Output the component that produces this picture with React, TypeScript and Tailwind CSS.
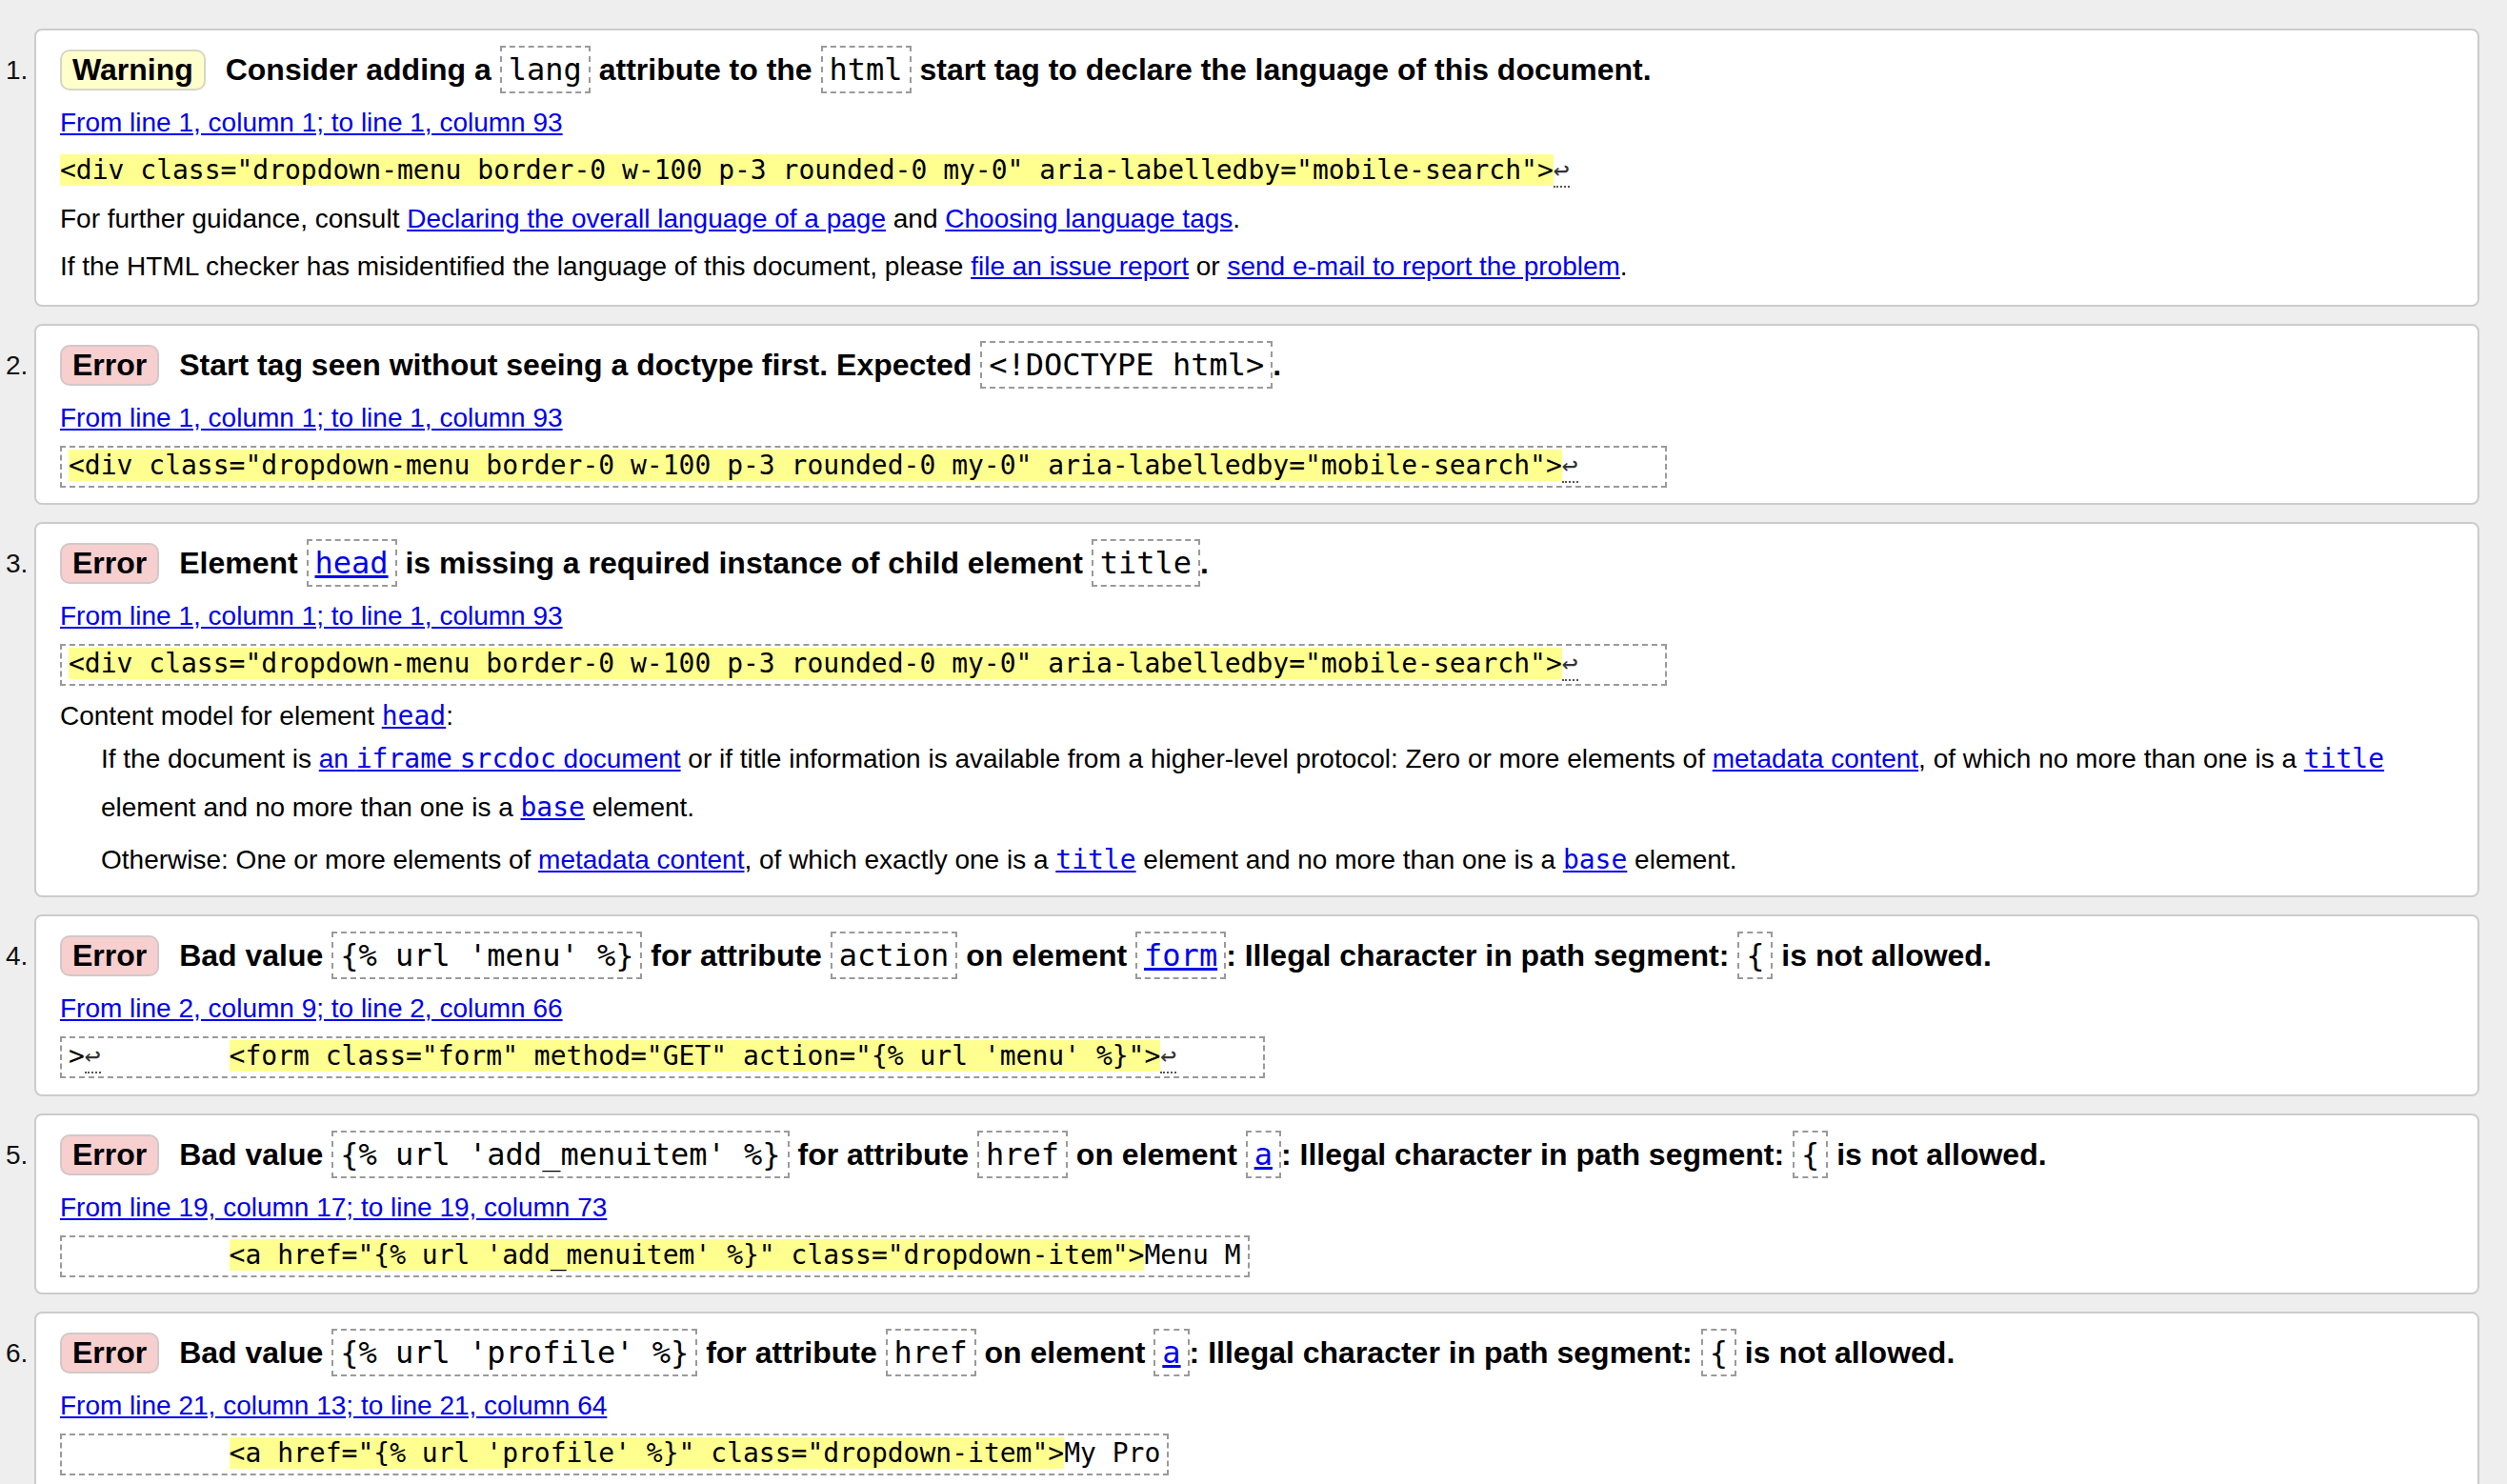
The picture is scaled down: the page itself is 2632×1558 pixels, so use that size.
import React from "react";

const SANS = "font-['Liberation_Sans',Arial,Helvetica,sans-serif]";
const MONO = "font-['DejaVu_Sans_Mono',Menlo,monospace]";

function A({ children, mono }: { children: React.ReactNode; mono?: boolean }) {
  return (
    <a href="#" className={`text-[#0000ee] underline ${mono ? MONO : ""}`}>
      {children}
    </a>
  );
}

function C({ children }: { children: React.ReactNode }) {
  return (
    <code className={`${MONO} font-normal border-2 border-dashed border-[#9a9a9a] px-[7px] py-[4px]`}>
      {children}
    </code>
  );
}

function Badge({ kind }: { kind: "Warning" | "Error" }) {
  return (
    <span
      className={`mr-[12px] inline-block rounded-[10px] border-2 px-[11px] py-[1px] leading-[37px] ${
        kind === "Warning" ? "border-[#d6d6c4] bg-[#ffffcc]" : "border-[#d2c8c8] bg-[#f7cfcf]"
      }`}
    >
      {kind}
    </span>
  );
}

function Title({ children }: { children: React.ReactNode }) {
  return <div className="h-[49px] whitespace-nowrap text-[32px] font-bold leading-[49px]">{children}</div>;
}

function Loc({ children }: { children: React.ReactNode }) {
  return (
    <p className="mt-[14px] text-[28px] leading-[34px]">
      <A>{children}</A>
    </p>
  );
}

function Extract({ children, boxed = true }: { children: React.ReactNode; boxed?: boolean }) {
  return (
    <div
      className={`${MONO} mt-[12px] w-fit whitespace-pre text-[28px] leading-[33px] ${
        boxed ? "border-2 border-dashed border-[#9a9a9a] px-[7px] pt-[2px] pb-[5px]" : "pt-[4px] pb-[7px]"
      }`}
    >
      {children}
    </div>
  );
}

function H({ children }: { children: React.ReactNode }) {
  return <mark className="bg-[#ffff90] text-black">{children}</mark>;
}

function LB() {
  return <span className="border-b-2 border-dotted border-[#555] text-[#333]">↩</span>;
}

function Card({ n, pb, children }: { n: number; pb: string; children: React.ReactNode }) {
  return (
    <div className="flex">
      <div className="w-[36px] shrink-0 pl-[6px] pt-[19px] text-[28px] leading-[49px] text-[#111]">{n}.</div>
      <div className={`min-w-0 flex-1 rounded-[8px] border-2 border-[#cccccc] bg-white pl-[25px] pr-[25px] pt-[17px] ${pb}`}>
        {children}
      </div>
    </div>
  );
}

const DIV_LINE = 'div class="dropdown-menu border-0 w-100 p-3 rounded-0 my-0" aria-labelledby="mobile-search">';

export default function App() {
  return (
    <div className={`${SANS} min-h-screen bg-[#eeeeee] pt-[30px] pr-[29px] text-black`}>
      <div className="flex flex-col gap-[18px]">
        <Card n={1} pb="pb-[23px]">
          <Title>
            <Badge kind="Warning" />{" "}
            Consider adding a <C>lang</C> attribute to the <C>html</C> start tag to declare the language of this
            document.
          </Title>
          <Loc>From line 1, column 1; to line 1, column 93</Loc>
          <Extract boxed={false}>
            <H>{"<" + DIV_LINE}</H>
            <LB />
          </Extract>
          <p className="mt-[11px] text-[28px] leading-[34px]">
            For further guidance, consult <A>Declaring the overall language of a page</A> and{" "}
            <A>Choosing language tags</A>.
          </p>
          <p className="mt-[16px] text-[28px] leading-[34px]">
            If the HTML checker has misidentified the language of this document, please <A>file an issue report</A> or{" "}
            <A>send e-mail to report the problem</A>.
          </p>
        </Card>

        <Card n={2} pb="pb-[16px]">
          <Title>
            <Badge kind="Error" />{" "}
            Start tag seen without seeing a doctype first. Expected <C>{"<!DOCTYPE html>"}</C>.
          </Title>
          <Loc>From line 1, column 1; to line 1, column 93</Loc>
          <Extract>
            <H>{"<" + DIV_LINE}</H>
            <LB />
            {"     "}
          </Extract>
        </Card>

        <Card n={3} pb="pb-[12px]">
          <Title>
            <Badge kind="Error" />{" "}
            Element{" "}
            <C>
              <A>head</A>
            </C>{" "}
            is missing a required instance of child element <C>title</C>.
          </Title>
          <Loc>From line 1, column 1; to line 1, column 93</Loc>
          <Extract>
            <H>{"<" + DIV_LINE}</H>
            <LB />
            {"     "}
          </Extract>
          <p className="mt-[15px] text-[28px] leading-[34px]">
            Content model for element <A mono>head</A>:
          </p>
          <div className="mt-[2px] whitespace-nowrap pl-[43px] text-[28px] leading-[51px]">
            If the document is{" "}
            <A>
              an <span className={MONO}>iframe</span> <span className={MONO}>srcdoc</span> document
            </A>{" "}
            or if title information is available from a higher-level protocol: Zero or more elements of{" "}
            <A>metadata content</A>, of which no more than one is a <A mono>title</A>
            <br />
            element and no more than one is a <A mono>base</A> element.
          </div>
          <div className="mt-[4px] pl-[43px] text-[28px] leading-[51px]">
            Otherwise: One or more elements of <A>metadata content</A>, of which exactly one is a <A mono>title</A>{" "}
            element and no more than one is a <A mono>base</A> element.
          </div>
        </Card>

        <Card n={4} pb="pb-[17px]">
          <Title>
            <Badge kind="Error" />{" "}
            Bad value <C>{"{% url 'menu' %}"}</C> for attribute <C>action</C> on element{" "}
            <C>
              <A>form</A>
            </C>
            : Illegal character in path segment: <C>{"{"}</C> is not allowed.
          </Title>
          <Loc>From line 2, column 9; to line 2, column 66</Loc>
          <Extract>
            {">"}
            <LB />
            {"        "}
            <H>{`<form class="form" method="GET" action="{% url 'menu' %}">`}</H>
            <LB />
            {"     "}
          </Extract>
        </Card>

        <Card n={5} pb="pb-[16px]">
          <Title>
            <Badge kind="Error" />{" "}
            Bad value <C>{"{% url 'add_menuitem' %}"}</C> for attribute <C>href</C> on element{" "}
            <C>
              <A>a</A>
            </C>
            : Illegal character in path segment: <C>{"{"}</C> is not allowed.
          </Title>
          <Loc>From line 19, column 17; to line 19, column 73</Loc>
          <Extract>
            {"          "}
            <H>{`<a href="{% url 'add_menuitem' %}" class="dropdown-item">`}</H>
            {"Menu M"}
          </Extract>
        </Card>

        <Card n={6} pb="pb-[16px]">
          <Title>
            <Badge kind="Error" />{" "}
            Bad value <C>{"{% url 'profile' %}"}</C> for attribute <C>href</C> on element{" "}
            <C>
              <A>a</A>
            </C>
            : Illegal character in path segment: <C>{"{"}</C> is not allowed.
          </Title>
          <Loc>From line 21, column 13; to line 21, column 64</Loc>
          <Extract>
            {"          "}
            <H>{`<a href="{% url 'profile' %}" class="dropdown-item">`}</H>
            {"My Pro"}
          </Extract>
        </Card>
      </div>
    </div>
  );
}
